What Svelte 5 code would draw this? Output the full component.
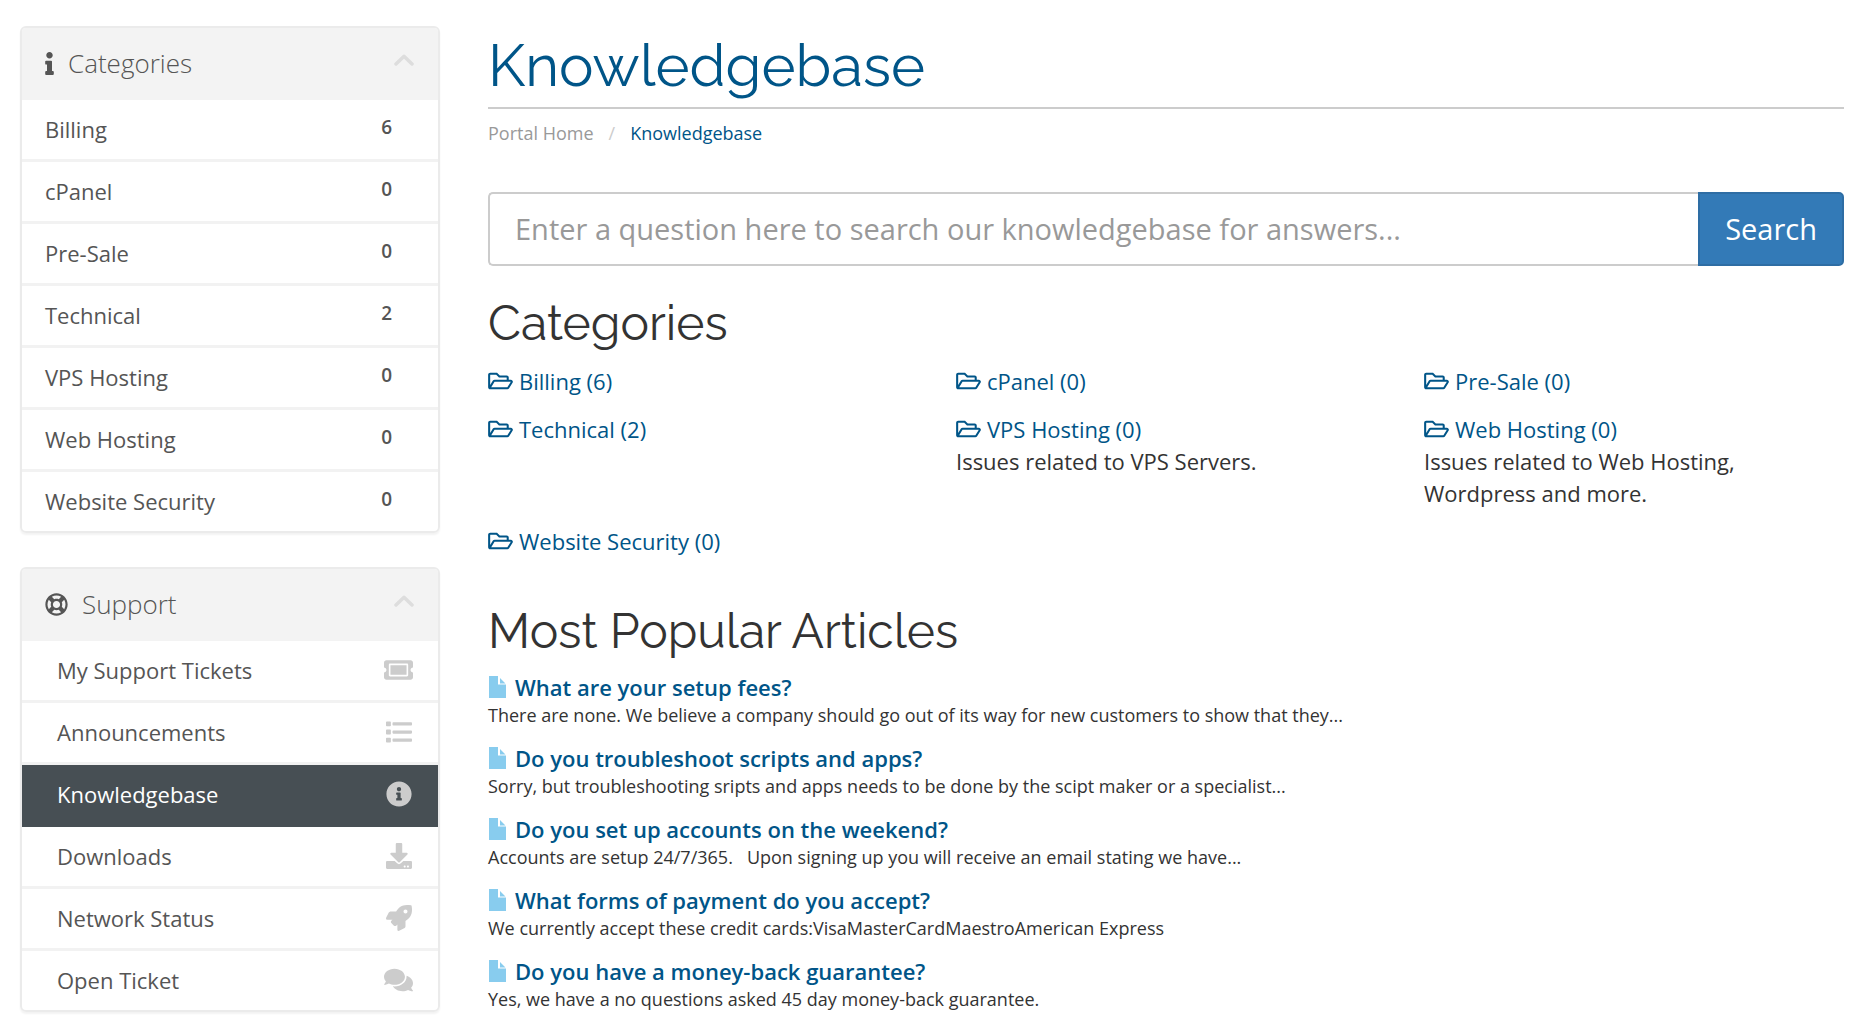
<script lang="ts">
  type Category = {
    name: string;
    count: number;
    description?: string;
  };

  type Article = {
    title: string;
    excerpt: string;
  };

  type SupportLink = {
    label: string;
    icon: string;
    width: number;
    active?: boolean;
  };

  const categories: Category[] = [
    { name: 'Billing', count: 6 },
    { name: 'cPanel', count: 0 },
    { name: 'Pre-Sale', count: 0 },
    { name: 'Technical', count: 2 },
    { name: 'VPS Hosting', count: 0, description: 'Issues related to VPS Servers.' },
    { name: 'Web Hosting', count: 0, description: 'Issues related to Web Hosting, Wordpress and more.' },
    { name: 'Website Security', count: 0 },
  ];

  const articles: Article[] = [
    {
      title: 'What are your setup fees?',
      excerpt: 'There are none. We believe a company should go out of its way for new customers to show that they...',
    },
    {
      title: 'Do you troubleshoot scripts and apps?',
      excerpt: 'Sorry, but troubleshooting sripts and apps needs to be done by the scipt maker or a specialist...',
    },
    {
      title: 'Do you set up accounts on the weekend?',
      excerpt: 'Accounts are setup 24/7/365.\u00a0\u00a0 Upon signing up you will receive an email stating we have...',
    },
    {
      title: 'What forms of payment do you accept?',
      excerpt: 'We currently accept these credit cards:VisaMasterCardMaestroAmerican Express',
    },
    {
      title: 'Do you have a money-back guarantee?',
      excerpt: 'Yes, we have a no questions asked 45 day money-back guarantee.',
    },
  ];

  // Icon paths use a 512 unit high grid
  const icons: Record<string, string> = {
    ticket: 'M128 160h320v192H128V160zm400 96c0 26.5 21.5 48 48 48v96c0 26.5-21.5 48-48 48H48c-26.5 0-48-21.5-48-48v-96c26.5 0 48-21.5 48-48s-21.5-48-48-48v-96c0-26.5 21.5-48 48-48h480c26.5 0 48 21.5 48 48v96c-26.5 0-48 21.5-48 48zm-48-104c0-13.3-10.7-24-24-24H120c-13.3 0-24 10.7-24 24v208c0 13.3 10.7 24 24 24h336c13.3 0 24-10.7 24-24V152z',
    list: 'M80 368H16a16 16 0 0 0-16 16v64a16 16 0 0 0 16 16h64a16 16 0 0 0 16-16v-64a16 16 0 0 0-16-16zm0-320H16A16 16 0 0 0 0 64v64a16 16 0 0 0 16 16h64a16 16 0 0 0 16-16V64a16 16 0 0 0-16-16zm0 160H16a16 16 0 0 0-16 16v64a16 16 0 0 0 16 16h64a16 16 0 0 0 16-16v-64a16 16 0 0 0-16-16zm416 176H144a16 16 0 0 0-16 16v32a16 16 0 0 0 16 16h352a16 16 0 0 0 16-16v-32a16 16 0 0 0-16-16zm0-320H144a16 16 0 0 0-16 16v32a16 16 0 0 0 16 16h352a16 16 0 0 0 16-16V80a16 16 0 0 0-16-16zm0 160H144a16 16 0 0 0-16 16v32a16 16 0 0 0 16 16h352a16 16 0 0 0 16-16v-32a16 16 0 0 0-16-16z',
    info: 'M256 8C119 8 8 119.1 8 256c0 137 111 248 248 248s248-111 248-248C504 119.1 393 8 256 8zm0 110c23.2 0 42 18.8 42 42s-18.8 42-42 42-42-18.8-42-42 18.8-42 42-42zm56 254c0 6.6-5.4 12-12 12h-88c-6.6 0-12-5.4-12-12v-24c0-6.6 5.4-12 12-12h12v-64h-12c-6.6 0-12-5.4-12-12v-24c0-6.6 5.4-12 12-12h64c6.6 0 12 5.4 12 12v100h12c6.6 0 12 5.4 12 12v24z',
    download: 'M216 0h80c13.3 0 24 10.7 24 24v168h87.7c17.8 0 26.7 21.5 14.1 34.1L269.7 378.3c-7.5 7.5-19.8 7.5-27.3 0L90.1 226.1c-12.6-12.6-3.7-34.1 14.1-34.1H192V24c0-13.3 10.7-24 24-24zm296 376v112c0 13.3-10.7 24-24 24H24c-13.3 0-24-10.7-24-24V376c0-13.3 10.7-24 24-24h146.7l49 49c20.1 20.1 52.5 20.1 72.6 0l49-49H488c13.3 0 24 10.7 24 24zm-124 88c0-11-9-20-20-20s-20 9-20 20 9 20 20 20 20-9 20-20zm64 0c0-11-9-20-20-20s-20 9-20 20 9 20 20 20 20-9 20-20z',
    rocket: 'M505.1 19.1c-1.2-5.5-6.7-11-12.2-12.2C460.7 0 435.5 0 410.4 0 307.2 0 245.3 55.2 199.1 128H94.8c-16.3 0-35.6 11.9-42.9 26.5L2.5 253.3A28.4 28.4 0 0 0 0 264a24 24 0 0 0 24 24h103.8l-22.5 22.5c-11.4 11.4-13 32.3 0 45.2l50.9 50.9c11.2 11.2 32.2 13.2 45.3 0l22.5-22.4V488a24 24 0 0 0 24 24 28.6 28.6 0 0 0 10.7-2.5l98.7-49.4c14.6-7.3 26.5-26.5 26.5-42.9V312.8c72.6-46.3 128-108.4 128-211.1.1-25.2.1-50.4-6.8-82.6zM384 168a40 40 0 1 1 40-40 40 40 0 0 1-40 40z',
    comments: 'M416 192c0-88.4-93.1-160-208-160S0 103.6 0 192c0 34.3 14.1 65.9 38 92-13.4 30.2-35.5 54.2-35.8 54.5-2.2 2.3-2.8 5.7-1.5 8.7S4.8 352 8 352c36.6 0 66.9-12.3 88.7-25 32.2 15.7 70.3 25 111.3 25 114.9 0 208-71.6 208-160zm122 220c23.9-26 38-57.7 38-92 0-66.9-53.5-124.2-129.3-148.1.9 6.6 1.3 13.3 1.3 20.1 0 105.9-107.7 192-240 192-10.8 0-21.3-.8-31.7-1.9C207.8 439.6 281.8 480 368 480c41 0 79.1-9.2 111.3-25 21.8 12.7 52.1 25 88.7 25 3.2 0 6.1-1.9 7.3-4.8 1.3-2.9.7-6.3-1.5-8.7-.3-.3-22.4-24.2-35.8-54.5z',
  };

  const supportLinks: SupportLink[] = [
    { label: 'My Support Tickets', icon: 'ticket', width: 576 },
    { label: 'Announcements', icon: 'list', width: 512 },
    { label: 'Knowledgebase', icon: 'info', width: 512, active: true },
    { label: 'Downloads', icon: 'download', width: 512 },
    { label: 'Network Status', icon: 'rocket', width: 512 },
    { label: 'Open Ticket', icon: 'comments', width: 576 },
  ];

  let query = $state('');
  let showCategories = $state(true);
  let showSupport = $state(true);
</script>

{#snippet chevron(open: boolean)}
  <svg class="chevron" class:closed={!open} viewBox="0 0 20 12" aria-hidden="true">
    <path d="M2 10 10 2.3 18 10" />
  </svg>
{/snippet}

<div class="page">
  <aside class="sidebar">
    <section class="panel">
      <div class="panel-heading">
        <svg class="heading-icon narrow" viewBox="0 0 192 512" aria-hidden="true">
          <path d="M20 424.2h20V279.8H20c-11 0-20-9-20-20V212c0-11 9-20 20-20h112c11 0 20 9 20 20v212.2h20c11 0 20 9 20 20V492c0 11-9 20-20 20H20c-11 0-20-9-20-20v-47.8c0-11 9-20 20-20zM96 0C56.2 0 24 32.2 24 72s32.2 72 72 72 72-32.2 72-72S135.8 0 96 0z" />
        </svg>
        <h3>Categories</h3>
        <button class="toggle" aria-label="Toggle categories" onclick={() => (showCategories = !showCategories)}>
          {@render chevron(showCategories)}
        </button>
      </div>
      {#if showCategories}
        <nav class="list">
          {#each categories as category}
            <a class="item" href="#top">
              <span>{category.name}</span>
              <span class="badge">{category.count}</span>
            </a>
          {/each}
        </nav>
      {/if}
    </section>

    <section class="panel">
      <div class="panel-heading">
        <svg class="heading-icon" viewBox="0 0 512 512" aria-hidden="true">
          <path d="M256 504c137 0 248-111 248-248S393 8 256 8 8 119 8 256s111 248 248 248zm-103.4-76.7l53.4-53.4c31.8 13.5 68.1 13.5 100 0l53.4 53.4c-63.2 38.3-143.6 38.3-206.8 0zM336 256c0 44.1-35.9 80-80 80s-80-35.9-80-80 35.9-80 80-80 80 35.9 80 80zm91.3 103.4l-53.4-53.4c13.5-31.8 13.5-68.1 0-100l53.4-53.4c38.3 63.2 38.3 143.6 0 206.8zM359.4 84.7l-53.4 53.4c-31.8-13.5-68.1-13.5-100 0l-53.4-53.4c63.2-38.3 143.6-38.3 206.8 0zM84.7 152.6l53.4 53.4c-13.5 31.8-13.5 68.1 0 100l-53.4 53.4c-38.3-63.2-38.3-143.6 0-206.8z" />
        </svg>
        <h3>Support</h3>
        <button class="toggle" aria-label="Toggle support" onclick={() => (showSupport = !showSupport)}>
          {@render chevron(showSupport)}
        </button>
      </div>
      {#if showSupport}
        <nav class="list support">
          {#each supportLinks as link}
            <a class="item" class:active={link.active} href="#top">
              <span>{link.label}</span>
              <span class="link-icon">
                <svg viewBox="0 0 {link.width} 512" aria-hidden="true">
                  <path d={icons[link.icon]} />
                </svg>
              </span>
            </a>
          {/each}
        </nav>
      {/if}
    </section>
  </aside>

  <main class="content">
    <header class="page-header">
      <h1>Knowledgebase</h1>
    </header>
    <nav class="breadcrumb" aria-label="Breadcrumb">
      <a href="#top">Portal Home</a>
      <span class="divider">/</span>
      <span class="current">Knowledgebase</span>
    </nav>

    <form class="search" onsubmit={(e) => e.preventDefault()}>
      <input
        type="text"
        bind:value={query}
        aria-label="Search the knowledgebase"
        placeholder="Enter a question here to search our knowledgebase for answers..."
      />
      <button type="submit">Search</button>
    </form>

    <h2>Categories</h2>
    <div class="categories">
      {#each categories as category}
        <div class="category">
          <a href="#top">
            <svg class="folder" viewBox="0 0 576 512" aria-hidden="true">
              <path d="M527.9 224H480v-48c0-26.5-21.5-48-48-48H272l-64-64H48C21.5 64 0 85.5 0 112v288c0 26.5 21.5 48 48 48h400c16.5 0 31.9-8.5 40.7-22.6l79.9-128c20-31.9-3-73.4-40.7-73.4zM48 118c0-3.3 2.7-6 6-6h134.1l64 64H426c3.3 0 6 2.7 6 6v42H152c-16.8 0-32.4 8.8-41.1 23.2L48 351.4V118zm400 282H72l77.2-128H528l-80 128z" />
            </svg>
            <span>{category.name} ({category.count})</span>
          </a>
          {#if category.description}
            <p>{category.description}</p>
          {/if}
        </div>
      {/each}
    </div>

    <h2>Most Popular Articles</h2>
    <div class="articles">
      {#each articles as article}
        <article>
          <a href="#top">
            <svg class="file" viewBox="0 0 17 22" aria-hidden="true">
              <path d="M0 0h9v8.5h8V22H0zM11 2l5.5 5.5H11z" />
            </svg>
            <span>{article.title}</span>
          </a>
          <p>{article.excerpt}</p>
        </article>
      {/each}
    </div>
  </main>
</div>

<style>
  :global(body) {
    background-color: #fff;
    color: #333;
    font-family: 'Open Sans', 'Noto Sans', sans-serif;
    font-size: 22px;
    line-height: 32px;
  }

  h1,
  h2,
  h3,
  p {
    margin: 0;
  }

  a {
    color: #058;
    text-decoration: none;
  }

  button {
    cursor: pointer;
    font-family: inherit;
  }

  .page {
    display: grid;
    grid-template-columns: 420fr 1356fr;
    gap: 48px;
    padding: 26px 18px 20px 20px;
  }

  .sidebar {
    display: flex;
    flex-direction: column;
    gap: 34px;
  }

  .panel {
    border: 2px solid #ebebeb;
    border-radius: 6px;
    box-shadow: 0 2px 2px rgba(0, 0, 0, 0.05);
    overflow: hidden;
  }

  .panel-heading {
    display: flex;
    align-items: center;
    box-sizing: border-box;
    height: 72px;
    padding: 0 24px 2px 23px;
    background-color: #f3f3f3;
    color: #555;
  }

  .panel-heading h3 {
    flex: 1;
    font-size: 26px;
    font-weight: 300;
    line-height: 32px;
  }

  .heading-icon {
    width: 23px;
    height: 23px;
    margin-right: 14px;
    fill: #555;
  }

  .heading-icon.narrow {
    width: 9px;
  }

  .toggle {
    display: flex;
    padding: 0 0 6px;
    border: none;
    background: none;
  }

  .chevron {
    width: 20px;
    height: 12px;
    fill: none;
    stroke: #ddd;
    stroke-width: 3.5;
    stroke-linecap: round;
    stroke-linejoin: round;
  }

  .chevron.closed {
    transform: rotate(180deg);
  }

  .item {
    display: flex;
    align-items: center;
    justify-content: space-between;
    height: 57px;
    padding: 0 46px 2px 23px;
    border-bottom: 3px solid #f2f2f2;
    color: #555;
  }

  .item:last-child {
    border-bottom: none;
  }

  .support .item {
    padding: 0 25px 2px 35px;
  }

  .item.active {
    border-color: #474f54;
    background-color: #474f54;
    color: #fff;
  }

  .badge {
    padding-bottom: 3px;
    font-size: 19px;
    font-weight: 600;
    line-height: 24px;
  }

  .link-icon {
    display: flex;
    justify-content: center;
    width: 29px;
  }

  .link-icon svg {
    height: 26px;
    fill: #ccc;
  }

  h1,
  h2 {
    font-family: Raleway, Lato, sans-serif;
    font-weight: 400;
  }

  .page-header {
    padding: 8px 0 9px;
    border-bottom: 2px solid #ccc;
  }

  h1 {
    color: #058;
    font-size: 58px;
    line-height: 64px;
  }

  h2 {
    color: #333;
    font-size: 48px;
    line-height: 52px;
  }

  .breadcrumb {
    display: flex;
    gap: 15px;
    padding: 11px 0 46px;
    font-size: 18px;
    line-height: 26px;
  }

  .breadcrumb a {
    color: #999;
  }

  .divider {
    color: #ccc;
  }

  .current {
    color: #058;
  }

  .search {
    display: flex;
    height: 74px;
    margin-bottom: 31px;
  }

  .search input {
    flex: 1;
    min-width: 0;
    padding: 0 25px 2px;
    border: 2px solid #ccc;
    border-right: none;
    border-radius: 5px 0 0 5px;
    font-family: inherit;
    font-size: 29px;
  }

  .search input::placeholder {
    color: #999;
    opacity: 1;
  }

  .search button {
    padding: 0 25px 2px;
    border: 2px solid #2e6da4;
    border-radius: 0 5px 5px 0;
    background-color: #337ab7;
    color: #fff;
    font-size: 29px;
  }

  .categories {
    display: grid;
    grid-template-columns: repeat(3, 1fr);
    gap: 16px 48px;
    padding: 16px 0 48px;
  }

  .category a,
  article a {
    display: flex;
    align-items: center;
  }

  .folder {
    width: 25px;
    height: 22px;
    margin-right: 6px;
    fill: #058;
  }

  .articles {
    display: flex;
    flex-direction: column;
    gap: 15px;
    padding-top: 14px;
  }

  article a {
    font-weight: 600;
  }

  article p {
    font-size: 18px;
    line-height: 24px;
  }

  .file {
    width: 17px;
    height: 22px;
    margin: 0 9px 0 1px;
    fill: #8ce;
  }
</style>
